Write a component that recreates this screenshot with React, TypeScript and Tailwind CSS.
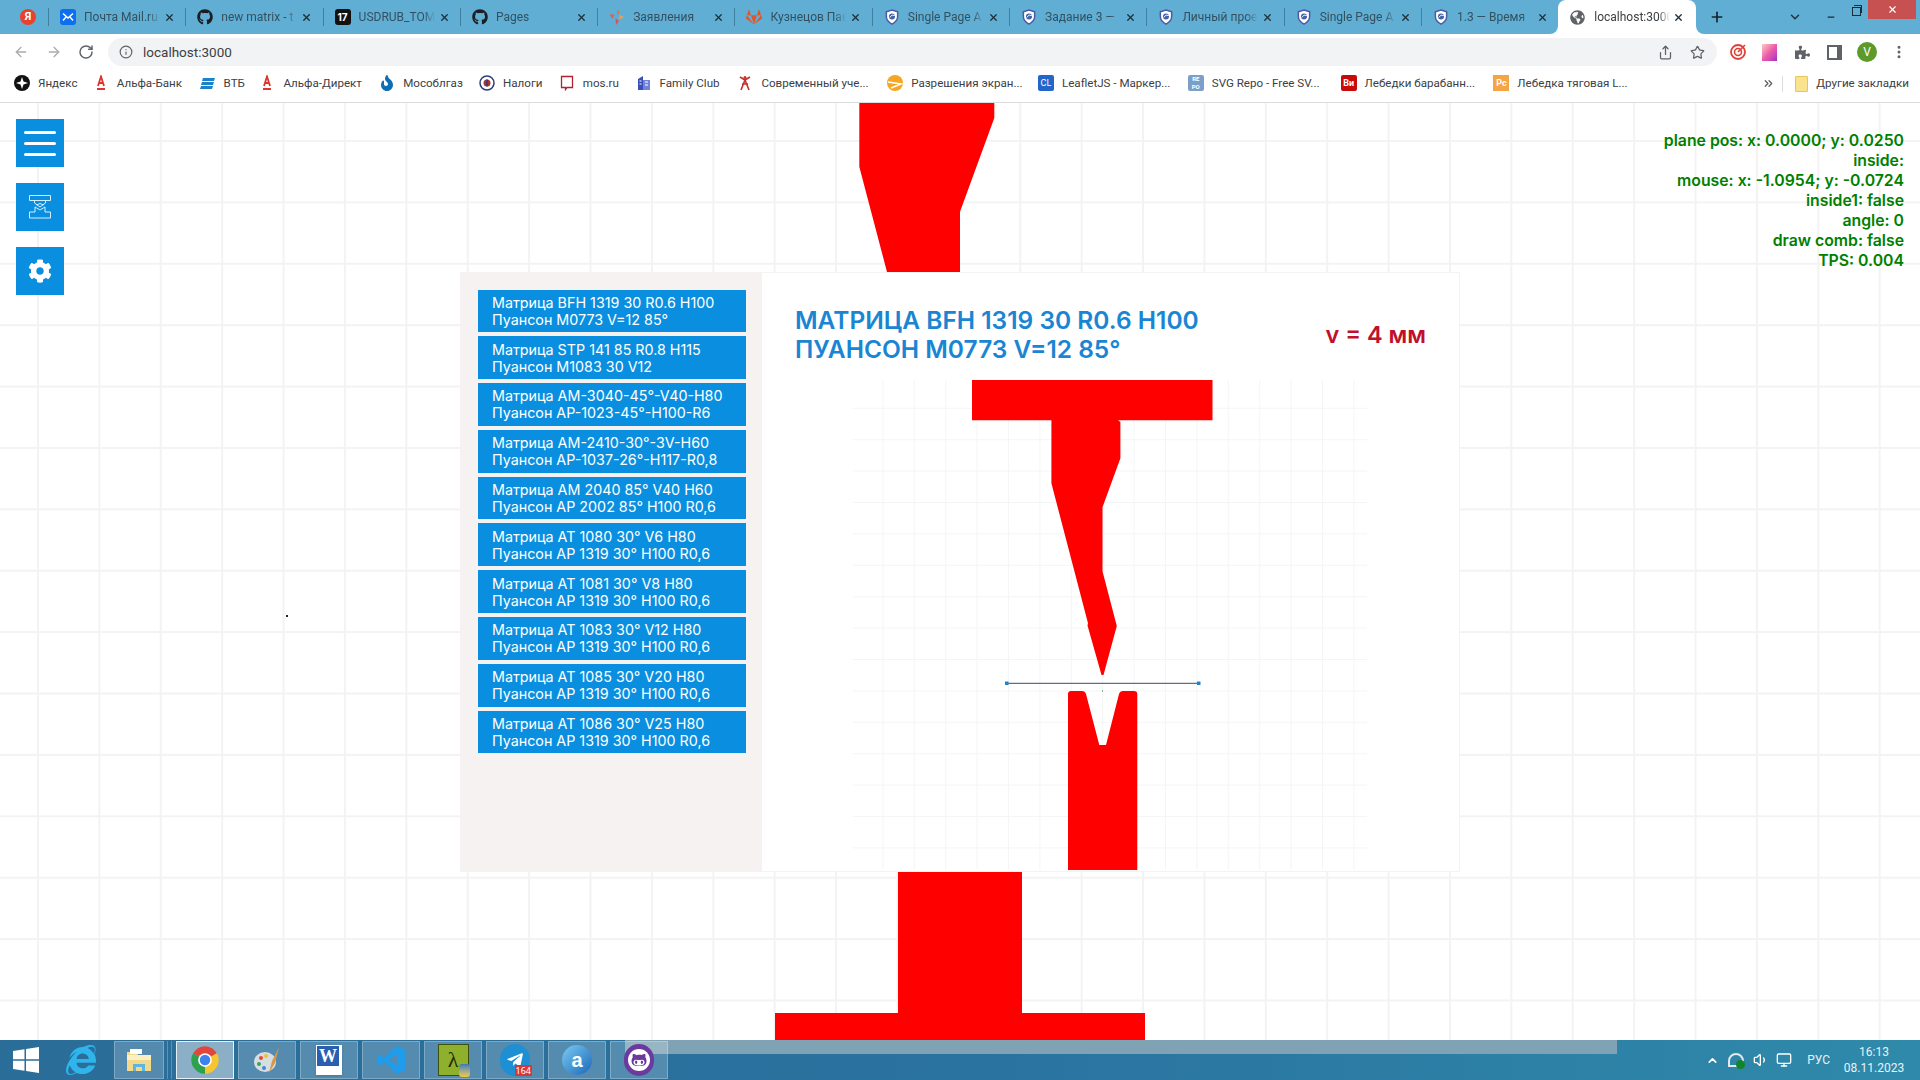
import type { ReactNode } from 'react';
import {
  ArrowLeft, ArrowRight, RotateCw, Info, Share, Star, X, Plus, ChevronDown, Minus, EllipsisVertical, ChevronsRight, Volume1, Monitor, ChevronUp,
} from 'lucide-react';
import { FaGithub, FaGitlab, FaCog, FaGlobeAmericas, FaPuzzlePiece, FaTelegramPlane, FaGithubAlt, FaInternetExplorer, FaFire } from 'react-icons/fa';

const chromeFont = "font-['Roboto',sans-serif]";

function Shield() {
  return (
    <svg viewBox="0 0 16 17" className="w-4 h-4">
      <path d="M8 1 L14 3 V8 C14 12 11 14.5 8 16 C5 14.5 2 12 2 8 V3 Z" fill="#fff" stroke="#4d5aa5" strokeWidth="1.6" />
      <circle cx="8" cy="8" r="3.2" fill="#3f63ad" />
      <path d="M5.5 9 Q8 5 11 7" fill="none" stroke="#fff" strokeWidth="1" />
    </svg>
  );
}

const tabs: { title: string; icon: ReactNode }[] = [
  {
    title: 'Почта Mail.ru',
    icon: (
      <svg viewBox="0 0 16 16" className="w-4 h-4">
        <rect width="16" height="16" rx="3" fill="#0d6ff0" />
        <path d="M3 4.5 L8 9 L13 4.5 M3 11.5 L6 8 M13 11.5 L10 8" fill="none" stroke="#fff" strokeWidth="1.5" />
      </svg>
    ),
  },
  { title: 'new matrix - t', icon: <FaGithub className="w-4 h-4 text-[#1b1f23]" /> },
  {
    title: 'USDRUB_TOM',
    icon: <span className="w-4 h-4 rounded-[3px] bg-[#111] text-white text-[10px] font-bold leading-4 text-center font-['Inter',sans-serif]">17</span>,
  },
  { title: 'Pages', icon: <FaGithub className="w-4 h-4 text-[#1b1f23]" /> },
  {
    title: 'Заявления',
    icon: (
      <svg viewBox="0 0 16 16" className="w-4 h-4">
        <path d="M8 0 L11 3.5 L8 6.5 Z" fill="#e8743b" />
        <path d="M1 5 L5.5 6 L3 10 Z" fill="#e35d4f" />
        <path d="M15 8 L10.5 6 L10.5 10.5 Z" fill="#f0a04b" />
        <path d="M6.5 9 L10 12 L7 16 Z" fill="#d9534f" />
      </svg>
    ),
  },
  { title: 'Кузнецов Пав', icon: <FaGitlab className="w-4 h-4 text-[#e2552b]" /> },
  { title: 'Single Page A', icon: <Shield /> },
  { title: 'Задание 3 —', icon: <Shield /> },
  { title: 'Личный прое', icon: <Shield /> },
  { title: 'Single Page A', icon: <Shield /> },
  { title: '1.3 — Время', icon: <Shield /> },
];

const bookmarks: { title: string; width: string; icon: ReactNode }[] = [
  {
    title: 'Яндекс', width: 'w-[38px]',
    icon: (
      <svg viewBox="0 0 16 16" className="w-4 h-4">
        <circle cx="8" cy="8" r="8" fill="#111" />
        <path d="M8 2 L9.5 6.5 L14 8 L9.5 9.5 L8 14 L6.5 9.5 L2 8 L6.5 6.5 Z" fill="#fff" />
      </svg>
    ),
  },
  {
    title: 'Альфа-Банк', width: 'w-[66px]',
    icon: (
      <svg viewBox="0 0 16 16" className="w-4 h-4">
        <path d="M5 11 L8 1.5 L11 11 M6 8 H10" fill="none" stroke="#e0332c" strokeWidth="1.8" />
        <rect x="4" y="13" width="8" height="2" fill="#e0332c" />
      </svg>
    ),
  },
  {
    title: 'ВТБ', width: 'w-[19px]',
    icon: (
      <svg viewBox="0 0 16 16" className="w-4 h-4">
        <path d="M3 3 H15 L14 6 H2 Z M2 7 H14 L13 10 H1 Z M1 11 H13 L12 14 H0 Z" fill="#1b83c9" />
      </svg>
    ),
  },
  {
    title: 'Альфа-Директ', width: 'w-[79px]',
    icon: (
      <svg viewBox="0 0 16 16" className="w-4 h-4">
        <path d="M5 11 L8 1.5 L11 11 M6 8 H10" fill="none" stroke="#e0332c" strokeWidth="1.8" />
        <rect x="4" y="13" width="8" height="2" fill="#e0332c" />
      </svg>
    ),
  },
  { title: 'Мособлгаз', width: 'w-[59px]', icon: <FaFire className="w-4 h-4 text-[#0f6db5]" /> },
  {
    title: 'Налоги', width: 'w-[39px]',
    icon: (
      <svg viewBox="0 0 16 16" className="w-4 h-4">
        <circle cx="8" cy="8" r="7" fill="#fff" stroke="#2a3f7a" strokeWidth="1.5" />
        <circle cx="8" cy="8" r="3.5" fill="#a33" />
        <path d="M8 4.5 V11.5" stroke="#2a3f7a" strokeWidth="1.5" />
      </svg>
    ),
  },
  {
    title: 'mos.ru', width: 'w-[36px]',
    icon: (
      <svg viewBox="0 0 16 16" className="w-4 h-4">
        <path d="M2.5 1.5 H13.5 V12.5 H8 L6.5 14.5 V12.5 H2.5 Z" fill="#fff" stroke="#b5222f" strokeWidth="1.3" />
      </svg>
    ),
  },
  {
    title: 'Family Club', width: 'w-[61px]',
    icon: (
      <svg viewBox="0 0 16 16" className="w-4 h-4">
        <path d="M2 15 V4 L7 1 V15 Z" fill="#3a4fb5" />
        <path d="M7 15 V5 H14 V15 Z" fill="#6f83d8" />
        <path d="M9 7 H12 M9 10 H12 M3.5 6 H5.5 M3.5 9 H5.5" stroke="#fff" strokeWidth="1.2" />
      </svg>
    ),
  },
  {
    title: 'Современный уче...', width: 'w-[109px]',
    icon: (
      <svg viewBox="0 0 16 16" className="w-4 h-4">
        <path d="M8 5 L4 15 M8 5 L12 15 M5 9 H11 M3 2 L8 5 L13 2" fill="none" stroke="#c5312b" strokeWidth="1.6" />
        <circle cx="8" cy="2.5" r="1.5" fill="#c5312b" />
      </svg>
    ),
  },
  {
    title: 'Разрешения экран...', width: 'w-[110px]',
    icon: (
      <svg viewBox="0 0 16 16" className="w-4 h-4">
        <circle cx="8" cy="8" r="8" fill="#f5a623" />
        <path d="M1 7 L14 9 L4 13" fill="none" stroke="#fff" strokeWidth="1.6" />
      </svg>
    ),
  },
  {
    title: 'LeafletJS - Маркер...', width: 'w-[109px]',
    icon: <span className="w-4 h-4 rounded-[2px] bg-[#2166c8] text-white text-[9px] leading-4 text-center">CL</span>,
  },
  {
    title: 'SVG Repo - Free SV...', width: 'w-[112px]',
    icon: <span className="w-4 h-4 rounded-[2px] bg-[#7b9fc9] text-white text-[6px] font-bold leading-[8px] text-center">RE<br />PO</span>,
  },
  {
    title: 'Лебедки барабанн...', width: 'w-[112px]',
    icon: <span className="w-4 h-4 rounded-[2px] bg-[#c90a0a] text-white text-[9px] font-bold leading-4 text-center">Ви</span>,
  },
  {
    title: 'Лебедка тяговая L...', width: 'w-[109px]',
    icon: <span className="w-4 h-4 bg-[#f5a546] text-white text-[9px] font-bold leading-4 text-center">Рс</span>,
  },
];

const items = [
  ['Матрица BFH 1319 30 R0.6 H100', 'Пуансон M0773 V=12 85°'],
  ['Матрица STP 141 85 R0.8 H115', 'Пуансон M1083 30 V12'],
  ['Матрица AM-3040-45°-V40-H80', 'Пуансон AP-1023-45°-H100-R6'],
  ['Матрица AM-2410-30°-3V-H60', 'Пуансон AP-1037-26°-H117-R0,8'],
  ['Матрица AM 2040 85° V40 H60', 'Пуансон AP 2002 85° H100 R0,6'],
  ['Матрица AT 1080 30° V6 H80', 'Пуансон AP 1319 30° H100 R0,6'],
  ['Матрица AT 1081 30° V8 H80', 'Пуансон AP 1319 30° H100 R0,6'],
  ['Матрица AT 1083 30° V12 H80', 'Пуансон AP 1319 30° H100 R0,6'],
  ['Матрица AT 1085 30° V20 H80', 'Пуансон AP 1319 30° H100 R0,6'],
  ['Матрица AT 1086 30° V25 H80', 'Пуансон AP 1319 30° H100 R0,6'],
];

const debugLines = [
  'plane pos: x: 0.0000; y: 0.0250',
  'inside:',
  'mouse: x: -1.0954; y: -0.0724',
  'inside1: false',
  'angle: 0',
  'draw comb: false',
  'TPS: 0.004',
];

function TabBar() {
  return (
    <div className={`h-[34px] bg-[#60aed4] flex items-center text-[12px] text-[#33505f] ${chromeFont}`}>
      <div className="w-12 pl-5 flex">
        <span className="w-4 h-4 rounded-full bg-[#e8412c] text-white text-[11px] font-bold leading-4 text-center">Я</span>
      </div>
      {tabs.map((t, i) => (
        <div key={i} className="w-[137.3px] h-[18px] shrink-0 flex items-center border-l border-[#3f7f9f] pl-[11px]">
          <span className="w-4 h-4 flex shrink-0">{t.icon}</span>
          <span className="ml-2 w-[76px] overflow-hidden whitespace-nowrap [mask-image:linear-gradient(to_right,#000_85%,transparent)]">{t.title}</span>
          <X className="ml-1 w-[11px] h-[11px] text-[#20323c] shrink-0" strokeWidth={3} />
        </div>
      ))}
      <div className="relative w-[138px] h-[34px] bg-white rounded-t-lg flex items-center pl-3 text-[#3c4043] shrink-0">
        <span className="absolute bottom-0 -left-2 w-2 h-2 bg-white">
          <span className="block w-2 h-2 bg-[#60aed4] rounded-br-lg" />
        </span>
        <span className="absolute bottom-0 -right-2 w-2 h-2 bg-white">
          <span className="block w-2 h-2 bg-[#60aed4] rounded-bl-lg" />
        </span>
        <FaGlobeAmericas className="w-[15px] h-[15px] text-[#5f6368] shrink-0" />
        <span className="ml-[9px] w-[76px] overflow-hidden whitespace-nowrap [mask-image:linear-gradient(to_right,#000_85%,transparent)]">localhost:3000</span>
        <X className="ml-[3px] w-[11px] h-[11px] text-[#20323c] shrink-0" strokeWidth={3} />
      </div>
      <Plus className="ml-[13px] w-[16px] h-[16px] text-[#15242c]" strokeWidth={2.5} />
      <ChevronDown className="ml-[63px] w-[14px] h-[14px] text-[#20323c]" strokeWidth={2.5} />
      <Minus className="ml-[24px] w-[10px] h-[10px] text-[#1d2b33]" strokeWidth={3} />
      <span className="ml-[16px] self-start mt-[7px] relative w-[9px] h-[9px] border border-[#1d2b33]">
        <span className="absolute -top-[3px] left-[1px] w-[8px] h-[8px] border-t border-r border-[#1d2b33]" />
      </span>
      <div className="ml-[7px] self-start w-[48px] h-[19px] bg-[#c75050] flex items-center justify-center text-white">
        <X className="w-[11px] h-[11px]" strokeWidth={2.5} />
      </div>
    </div>
  );
}

function Toolbar() {
  return (
    <div className={`h-[36px] bg-white flex items-center pl-[13px] ${chromeFont}`}>
      <ArrowLeft className="w-4 h-4 text-[#a9adb1]" />
      <ArrowRight className="ml-[17px] w-4 h-4 text-[#a9adb1]" />
      <RotateCw className="ml-4 w-4 h-4 text-[#5f6368]" strokeWidth={2.2} />
      <div className="ml-[14px] w-[1609px] h-[28px] rounded-full bg-[#f1f3f4] flex items-center pl-[11px] pr-[10px]">
        <Info className="w-[14px] h-[14px] text-[#5f6368]" />
        <span className="ml-[10px] text-[13.5px] text-[#3c4043]">localhost:3000</span>
        <Share className="ml-auto w-[15px] h-[15px] text-[#5f6368]" />
        <Star className="ml-[17px] mr-[2px] w-[15px] h-[15px] text-[#5f6368]" />
      </div>
      <div className="flex items-center ml-[13px]">
        <svg viewBox="0 0 16 16" className="w-4 h-4">
          <circle cx="8" cy="8" r="7" fill="none" stroke="#e0403a" strokeWidth="1.8" />
          <circle cx="8" cy="8" r="3.5" fill="none" stroke="#e0403a" strokeWidth="1.6" />
          <path d="M8 8 L15 1" stroke="#e0403a" strokeWidth="1.6" />
        </svg>
        <span className="ml-[16px] w-[15px] h-[17px] bg-gradient-to-br from-[#f7c9c2] via-[#ee5aa8] to-[#a52bc5]" />
        <FaPuzzlePiece className="ml-[18px] w-[15px] h-[15px] text-[#5f6368]" />
        <span className="ml-[17px] w-[15px] h-[15px] border-2 border-[#5f6368] border-r-[5px]" />
        <span className="ml-[15px] w-[20px] h-[20px] rounded-full bg-[#5c9a2c] text-white text-[12px] leading-[20px] text-center">V</span>
        <EllipsisVertical className="ml-[14px] w-[16px] h-[16px] text-[#5f6368]" strokeWidth={2.5} />
      </div>
    </div>
  );
}

function BookmarkBar() {
  return (
    <div className={`h-[33px] bg-white border-b border-[#dadce0] pb-[5px] flex items-center pl-[14px] text-[11.6px] text-[#3c4043] ${chromeFont}`}>
      <div className="flex items-center gap-[16.8px]">
        {bookmarks.map((b) => (
          <div key={b.title} className="flex items-center gap-2">
            <span className="w-4 h-4 flex shrink-0">{b.icon}</span>
            <span className={`${b.width} whitespace-nowrap`}>{b.title}</span>
          </div>
        ))}
      </div>
      <ChevronsRight className="ml-[136px] w-[13px] h-[13px] text-[#5f6368]" strokeWidth={2.5} />
      <span className="ml-[7px] w-px h-4 bg-[#dadce0]" />
      <span className="ml-[12px] w-[13px] h-[16px] bg-[#fbe38e] border border-[#e6c65c] rounded-[1px]" />
      <span className="ml-[8px] whitespace-nowrap">Другие закладки</span>
    </div>
  );
}

function SideButtons() {
  return (
    <div className="absolute left-4 top-4 flex flex-col gap-4">
      <button className="w-12 h-12 bg-[#0a8fe0] flex flex-col items-center justify-center gap-2">
        <span className="w-8 h-[3px] rounded-full bg-white" />
        <span className="w-8 h-[3px] rounded-full bg-white" />
        <span className="w-8 h-[3px] rounded-full bg-white" />
      </button>
      <button className="w-12 h-12 bg-[#0a8fe0] flex items-center justify-center">
        <svg viewBox="0 0 24 24" className="w-6 h-6" fill="none" stroke="#d5efff" strokeWidth="1">
          <path d="M1.5 0.5 H22.5 V5.5 H1.5 Z" />
          <path d="M6.5 5.5 V8 L12 12 L17.5 8 V5.5" />
          <path d="M8.5 10 L12 8.5 L15.5 10" />
          <path d="M7 12 L12 15 L17 12 V17 H22.5 V23 H1.5 V17 H7 Z" />
        </svg>
      </button>
      <button className="w-12 h-12 bg-[#0a8fe0] flex items-center justify-center">
        <FaCog className="w-6 h-6 text-white" />
      </button>
    </div>
  );
}

function PanelDrawing() {
  const vertical = Array.from({ length: 16 }, (_, i) => 882.9 + i * 31.4);
  const horizontal = Array.from({ length: 15 }, (_, i) => 408.3 + i * 31.4);
  return (
    <svg viewBox="853 380 514 490" className="ml-[91px] w-[514px] h-[490px] block">
      {vertical.map((x) => <line key={x} x1={x} x2={x} y1="380" y2="870" stroke="#f4f5f6" />)}
      {horizontal.map((y) => <line key={y} x1="853" x2="1367" y1={y} y2={y} stroke="#f4f5f6" />)}
      <path
        fill="#ff0000"
        d="M972 380 H1212.5 V420.3 H1118 L1120.4 422 V458.3 L1102.5 507.3 V571.3 L1116.8 626 L1103.5 675 H1101.5 L1087.5 625.5 L1088 623.3 L1051.4 483.3 V420.3 H972 Z"
      />
      <path
        fill="#ff0000"
        d="M1071 691 H1082 Q1085 691 1086 694 L1099.3 745 H1106 L1119 694 Q1120 691 1123 691 H1134 Q1137.3 691 1137.3 694 V870 H1068 V694 Q1068 691 1071 691 Z"
      />
      <line x1="1006.7" x2="1198.7" y1="683.3" y2="683.3" stroke="#5f7080" strokeWidth="1.2" />
      <rect x="1005" y="681.5" width="3.5" height="3.5" fill="#1a86d0" />
      <rect x="1197" y="681.5" width="3.5" height="3.5" fill="#1a86d0" />
      <rect x="1102" y="690.5" width="1" height="1" fill="#0a7a2a" />
    </svg>
  );
}

function Panel() {
  return (
    <div className="relative w-[1000px] h-[600px] flex bg-white border border-[#f5f3f2] font-['Inter',sans-serif]">
      <div className="w-[301px] shrink-0 bg-[#f5f2f1] pt-[17px] pl-[17px] flex flex-col gap-1">
        {items.map(([a, b]) => (
          <div key={a} className="w-[268px] h-[42.8px] bg-[#0a8fe0] pl-[14px] py-[4.4px] text-[14.3px] leading-[17px] text-white">
            <div className="whitespace-nowrap">{a}</div>
            <div className="whitespace-nowrap">{b}</div>
          </div>
        ))}
      </div>
      <div className="flex-1">
        <div className="flex items-center justify-between pl-[33px] pr-[33px] pt-[33px] mb-[16px]">
          <div className="text-[24.5px] leading-[29px] font-semibold text-[#1a86d3]">
            <div>МАТРИЦА BFH 1319 30 R0.6 H100</div>
            <div>ПУАНСОН M0773 V=12 85°</div>
          </div>
          <div className="text-[23.5px] font-semibold text-[#c0102c]">v = 4 мм</div>
        </div>
        <PanelDrawing />
      </div>
    </div>
  );
}

function Workspace() {
  return (
    <div className="relative flex-1 flex items-center justify-center overflow-hidden bg-white bg-[linear-gradient(to_right,#f3f3f3_1.5px,transparent_1.5px),linear-gradient(to_bottom,#f3f3f3_1.5px,transparent_1.5px)] bg-[size:61.4px_61.4px] bg-[position:37px_37px]">
      {/* the big tool parts sit behind the panel */}
      <svg viewBox="0 103 1920 937" className="absolute inset-0 w-full h-full">
        <path fill="#ff0000" d="M859.3 103 H994.3 V118 L960 211.7 V272 H887 L859.3 166.7 Z" />
        <path fill="#ff0000" d="M898 872 H1022 V1013 H1145 V1040 H775 V1013 H898 Z" />
      </svg>
      <span className="absolute left-[286px] top-[512px] w-[2px] h-[2px] bg-[#222]" />
      <SideButtons />
      <Panel />
      <div className="absolute right-[16px] top-[28px] text-right text-[15.8px] leading-[20px] font-semibold text-[#008000] font-['Inter',sans-serif]">
        {debugLines.map((l) => <div key={l}>{l}</div>)}
      </div>
    </div>
  );
}

function TaskButton({ active, children }: { active?: boolean; children: ReactNode }) {
  return (
    <div className={`relative z-10 ml-1 w-[58px] h-[38px] flex items-center justify-center border ${active ? 'border-white/80 bg-white/45' : 'border-white/25 bg-white/20'}`}>
      {children}
    </div>
  );
}

function Taskbar() {
  return (
    <div className="relative h-10 bg-gradient-to-r from-[#2a6d98] via-[#2a72a0] to-[#2f8aaa] flex items-center">
      {/* preview strip of another window, under the pinned icons */}
      <span className="absolute left-[625px] top-0 w-[992px] h-[14px] bg-[#7fa3b5]" />

      <div className="w-[52px] flex justify-center">
        <svg viewBox="0 0 26 26" className="w-[26px] h-[26px]" fill="#fff">
          <path d="M0 4 L11.5 2.3 V12.3 H0 Z M13 2 L26 0 V12.3 H13 Z M0 13.7 H11.5 V23.7 L0 22 Z M13 13.7 H26 V26 L13 24 Z" />
        </svg>
      </div>
      <div className="w-[58px] flex justify-center">
        <FaInternetExplorer className="w-[30px] h-[30px] text-[#2fb4ec]" />
      </div>
      <div className="ml-1 flex">
        <div className="w-[50px] h-[38px] flex items-center justify-center border border-white/25 bg-white/20">
          <svg viewBox="0 0 28 28" className="w-7 h-7">
            <path d="M2 6 H11 L13 9 H26 V25 H2 Z" fill="#f3d98a" />
            <rect x="2" y="9" width="24" height="5" fill="#fdf0c0" />
            <rect x="5" y="3" width="12" height="5" fill="#fff" />
            <path d="M8 25 V18 H20 V25 H17 V21 H11 V25 Z" fill="#5bb5e5" />
          </svg>
        </div>
        <span className="w-[4px] h-[38px] border-r border-white/25" />
        <span className="w-[4px] h-[38px] border-r border-white/25" />
      </div>
      <TaskButton active>
        <svg viewBox="0 0 24 24" className="w-[30px] h-[30px]">
          <path d="M2.5 6.5 A11 11 0 0 1 21.5 6.5 L12 12 Z" fill="#e0463a" />
          <path d="M21.5 6.5 A11 11 0 0 1 12 23 L12 12 Z" fill="#f7c52f" />
          <path d="M12 23 A11 11 0 0 1 2.5 6.5 L12 12 Z" fill="#2fa14c" />
          <circle cx="12" cy="12" r="5.5" fill="#fff" />
          <circle cx="12" cy="12" r="4.2" fill="#3f82ee" />
        </svg>
      </TaskButton>
      <TaskButton>
        <svg viewBox="0 0 30 30" className="w-[30px] h-[30px]">
          <ellipse cx="13" cy="17" rx="11" ry="10" fill="#d7dee2" />
          <circle cx="9" cy="13" r="2" fill="#e5483a" />
          <circle cx="14" cy="11" r="2" fill="#f2c230" />
          <circle cx="7" cy="19" r="2" fill="#3aa655" />
          <circle cx="12" cy="23" r="2" fill="#3d86d8" />
          <path d="M27 2 L20 16 L17 28 L23 18 Z" fill="#d9964a" />
        </svg>
      </TaskButton>
      <TaskButton>
        <div className="relative w-[26px] h-[30px] bg-white shadow-sm">
          <span className="absolute left-[1px] top-[1px] w-[22px] h-[20px] bg-[#2a5eb0] text-white text-[18px] font-bold leading-[20px] text-center font-['Liberation_Serif',serif]">W</span>
        </div>
      </TaskButton>
      <TaskButton>
        <svg viewBox="0 0 30 30" className="w-[30px] h-[30px]">
          <path d="M21 1 L29 5 V25 L21 29 L8 17 L3 21 L1 19 V11 L3 9 L8 13 Z M21 9 L13 15 L21 21 Z" fill="#1f9ceb" fillRule="evenodd" />
        </svg>
      </TaskButton>
      <TaskButton>
        <div className="relative w-[31px] h-[32px] bg-[#8fb02c] border border-[#3d4f10] flex items-center justify-center">
          <span className="text-[22px] text-[#1c2b00] leading-none font-['Liberation_Serif',serif]">λ</span>
          <span className="absolute -right-[2px] -bottom-[2px] w-[11px] h-[13px] rounded-[3px] bg-gradient-to-b from-[#3d7ab8] to-[#f0c838]" />
        </div>
      </TaskButton>
      <TaskButton>
        <div className="relative w-[30px] h-[32px] rounded-full bg-[#1f8fd4] flex items-center justify-center">
          <FaTelegramPlane className="w-[18px] h-[18px] text-white" />
          <span className="absolute -right-[2px] bottom-0 h-[11px] px-[1px] bg-[#d9363a] text-white text-[9px] leading-[11px]">164</span>
        </div>
      </TaskButton>
      <TaskButton>
        <div className="w-[30px] h-[30px] rounded-full bg-gradient-to-br from-[#7ccbf2] to-[#1668b8] flex items-center justify-center text-white text-[20px] font-bold leading-none font-['Liberation_Sans',sans-serif]">a</div>
      </TaskButton>
      <TaskButton>
        <div className="w-[30px] h-[32px] rounded-full bg-[#6b3a9e] flex items-center justify-center">
          <div className="w-[22px] h-[22px] rounded-full bg-white flex items-center justify-center">
            <FaGithubAlt className="w-[16px] h-[16px] text-[#6b3a9e]" />
          </div>
        </div>
      </TaskButton>

      <div className={`absolute right-0 top-0 h-10 flex items-center text-[12px] text-[#e8f2f7] ${chromeFont}`}>
        <ChevronUp className="w-[13px] h-[13px] text-white" strokeWidth={3} />
        <span className="relative ml-[9px] w-[16px] h-[14px] rounded-t-full border-2 border-[#dfe9ee]">
          <span className="absolute -right-[3px] -bottom-[4px] w-[9px] h-[9px] rounded-full bg-[#12852c]" />
        </span>
        <Volume1 className="ml-[9px] w-[16px] h-[16px] text-white" />
        <Monitor className="ml-[7px] w-[16px] h-[16px] text-white" />
        <span className="ml-[15px]">РУС</span>
        <div className="ml-[10px] w-[80px] text-center leading-[16px] pr-[12px]">
          <div>16:13</div>
          <div className="text-[12px]">08.11.2023</div>
        </div>
      </div>
    </div>
  );
}

export default function App() {
  return (
    <div className="w-[1920px] h-[1080px] flex flex-col overflow-hidden bg-white">
      <TabBar />
      <Toolbar />
      <BookmarkBar />
      <Workspace />
      <Taskbar />
    </div>
  );
}
